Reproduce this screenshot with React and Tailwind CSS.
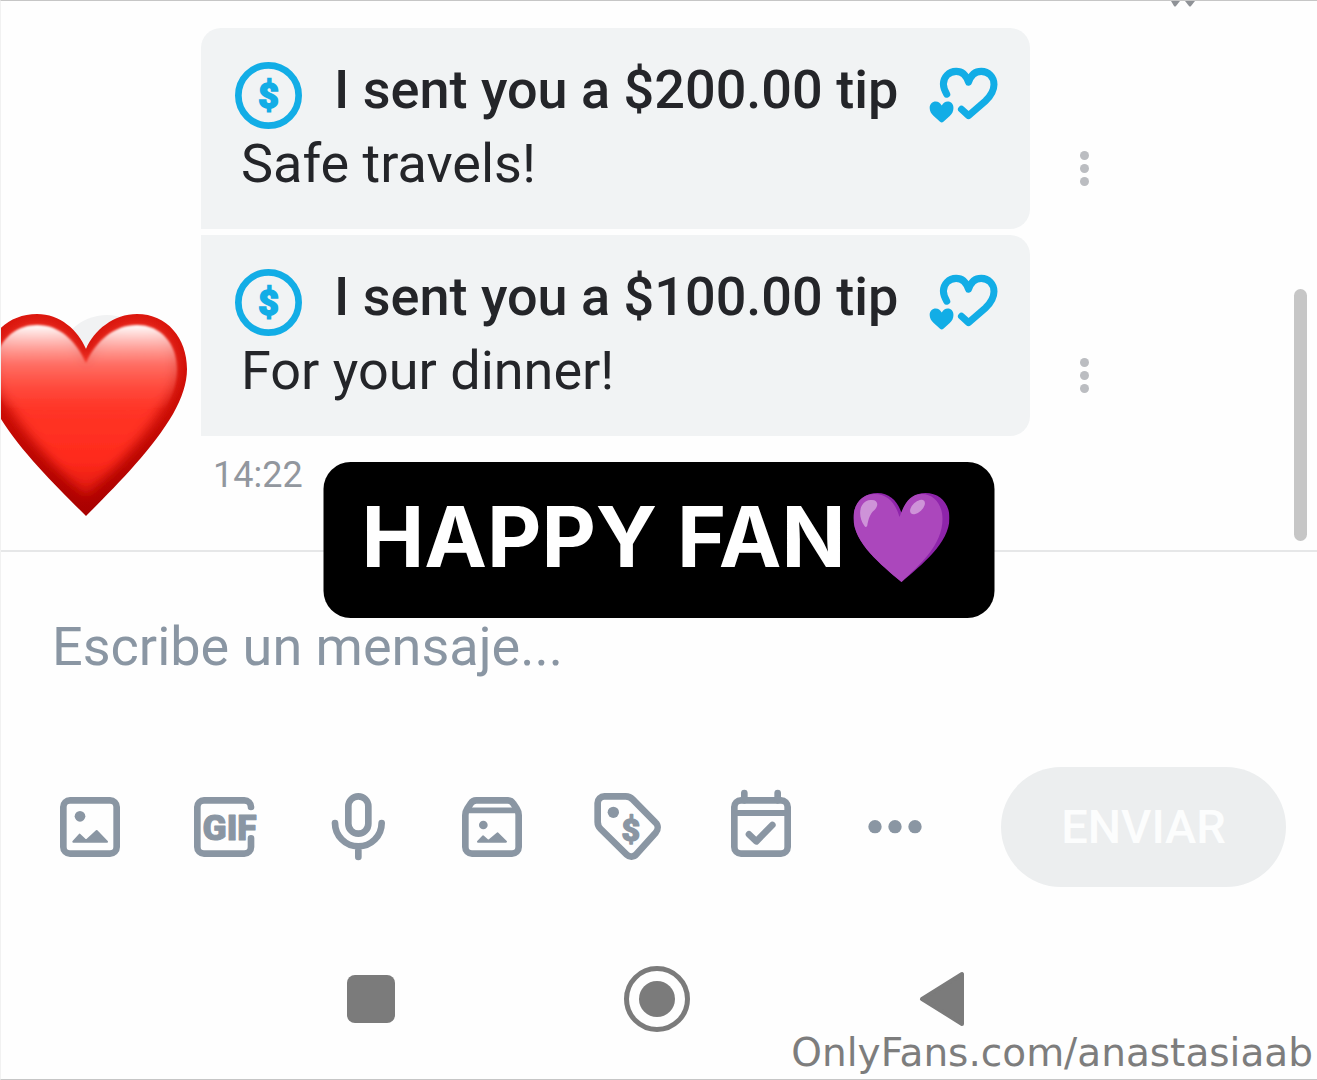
const messages = [
  { id: 1, amount: '$200.00', body: 'Safe travels!' },
  { id: 2, amount: '$100.00', body: 'For your dinner!' },
]

function DollarIcon() {
  return (
    <svg viewBox="2 2 20 20" className="size-[67px] shrink-0 text-[#12ade6]" fill="none" aria-hidden="true">
      <circle cx="12" cy="12" r="9" stroke="currentColor" strokeWidth="2" />
      <text
        x="12"
        y="15.7"
        textAnchor="middle"
        fontSize="10.6"
        fill="currentColor"
        stroke="currentColor"
        strokeWidth=".5"
        className="font-['Roboto',sans-serif] font-black"
      >
        $
      </text>
    </svg>
  )
}

function HeartsIcon() {
  return (
    <svg viewBox="2 2 20 20" className="size-[67px] shrink-0 overflow-visible text-[#12ade6]" fill="none" aria-hidden="true">
      <path
        d="M7 11.6C6.3 10.4 6 9.5 6 8.6C6 6.5 7.6 4.8 9.8 4.8C11.6 4.8 12.8 5.9 13.5 8C14.2 5.9 15.5 4.8 17.3 4.8C19.5 4.8 21.1 6.5 21.1 8.7C21.1 10.8 20 12.2 18.6 13.6L13.5 18L11.4 16.1"
        stroke="currentColor"
        strokeWidth="2.1"
        strokeLinecap="round"
        strokeLinejoin="round"
      />
      <path
        d="M5.5 15C5 14.2 4.5 13.8 3.7 13.8C2.7 13.8 1.9 14.6 1.9 15.7C1.9 16.7 2.4 17.4 3.1 18.1L5 19.8C5.3 20.1 5.7 20.1 6 19.8L7.9 18.1C8.6 17.4 9 16.7 9 15.7C9 14.6 8.3 13.8 7.3 13.8C6.5 13.8 6 14.2 5.5 15Z"
        fill="currentColor"
      />
    </svg>
  )
}

function ToolIcon({ children }) {
  return (
    <svg
      viewBox="0 0 24 24"
      className="size-20"
      fill="none"
      stroke="currentColor"
      strokeWidth="2"
      strokeLinecap="round"
      strokeLinejoin="round"
      aria-hidden="true"
    >
      {children}
    </svg>
  )
}

const tools = [
  {
    label: 'Imagen',
    icon: (
      <>
        <rect x="4" y="4" width="16" height="16" rx="2" />
        <circle cx="9" cy="8.8" r="1.6" fill="currentColor" stroke="none" />
        <path d="M7 16.4L8.9 14.3L10.8 16.1L14 13.2L17.1 16.4Z" fill="currentColor" strokeWidth=".6" />
      </>
    ),
  },
  {
    label: 'GIF',
    icon: (
      <>
        <path d="M20.1 6V6A2 2 0 0 0 18.1 4H6A2 2 0 0 0 4 6V18A2 2 0 0 0 6 20H18.1A2 2 0 0 0 20.1 18V15.4" />
        <text
          x="13.7"
          y="15.8"
          textAnchor="middle"
          fontSize="10.6"
          fill="currentColor"
          stroke="currentColor"
          strokeWidth=".3"
          className="font-['Roboto',sans-serif] font-black"
        >
          GIF
        </text>
      </>
    ),
  },
  {
    label: 'Audio',
    icon: (
      <>
        <rect x="9.1" y="2.8" width="6" height="11.2" rx="3" />
        <path d="M5.1 10.8A7 7 0 0 0 19.1 10.8M12.1 18V21" />
      </>
    ),
  },
  {
    label: 'Archivo',
    icon: (
      <>
        <path d="M4 8.5V18A2 2 0 0 0 6 20H18A2 2 0 0 0 20 18V8.5C20 7.7 19.8 7.1 19.4 6.5L18.4 5A2 2 0 0 0 16.7 4H7.3A2 2 0 0 0 5.6 5L4.6 6.5C4.2 7.1 4 7.7 4 8.5Z" />
        <path d="M4.6 7H19.4" strokeWidth="1.7" />
        <circle cx="9.4" cy="11.4" r="1.3" fill="currentColor" stroke="none" />
        <path d="M7.8 16.4L9.3 14.8L10.9 16.2L13.7 13.9L16.2 16.4Z" fill="currentColor" strokeWidth=".6" />
      </>
    ),
  },
  {
    label: 'Precio',
    icon: (
      <>
        <path d="M5.2 2.8H11.6A3 3 0 0 1 13.7 3.7L20.5 10.6A2.2 2.2 0 0 1 20.6 13.7L14.8 20.2A2 2 0 0 1 11.9 20.3L4.1 12.6A3 3 0 0 1 3.2 10.5V4.8A2 2 0 0 1 5.2 2.8Z" />
        <circle cx="7.9" cy="7.6" r="1.7" fill="currentColor" stroke="none" />
        <text
          x="13.1"
          y="16.1"
          textAnchor="middle"
          fontSize="9.6"
          fill="currentColor"
          stroke="currentColor"
          strokeWidth=".4"
          className="font-['Roboto',sans-serif] font-black"
        >
          $
        </text>
      </>
    ),
  },
  {
    label: 'Programar',
    icon: (
      <>
        <rect x="4" y="4" width="16" height="16" rx="2" />
        <path d="M7 1.8V4M17 1.8V4" />
        <path d="M4 7.8H20" strokeWidth="1.8" />
        <path d="M8.4 14.2L10.6 16.3L15.4 11.4" />
      </>
    ),
  },
  {
    label: 'Más',
    icon: (
      <g fill="currentColor" stroke="none">
        <circle cx="6" cy="11.9" r="2" />
        <circle cx="12" cy="11.9" r="2" />
        <circle cx="18" cy="11.9" r="2" />
      </g>
    ),
  },
]

function Message({ amount, body }) {
  return (
    <li className="flex items-end gap-[34px]">
      <div className="min-w-0 flex-1 rounded-r-[20px] bg-[#f1f3f4] pt-[34px] pr-[33px] pb-[30px] pl-[34px]">
        <div className="flex items-start">
          <DollarIcon />
          <p className="ml-8 flex-1 text-[54px] leading-14 font-medium whitespace-nowrap">I sent you a {amount} tip</p>
          <HeartsIcon />
        </div>
        <p className="pl-[6px] text-[54px] leading-[70px]">{body}</p>
      </div>
      <button type="button" aria-label="Opciones" className="mb-[41px] flex h-10 w-10 flex-col items-center justify-center gap-1">
        <span className="size-[9px] rounded-full bg-[#bbbdc1]" />
        <span className="size-[9px] rounded-full bg-[#bbbdc1]" />
        <span className="size-[9px] rounded-full bg-[#bbbdc1]" />
      </button>
    </li>
  )
}

// Glossy red heart that covers the sender's avatar
function RedHeart() {
  return (
    <svg viewBox="0 0 204 204" className="absolute top-[312px] -left-[17px] size-[204px]" aria-hidden="true">
      <defs>
        <linearGradient id="redBody" x1="0" y1="10" x2="0" y2="195" gradientUnits="userSpaceOnUse">
          <stop offset="0" stopColor="#ff4638" />
          <stop offset=".45" stopColor="#ff3527" />
          <stop offset=".75" stopColor="#ff2a1c" />
          <stop offset="1" stopColor="#d01006" />
        </linearGradient>
        <linearGradient id="redRim" x1="0" y1="0" x2="0" y2="1">
          <stop offset="0" stopColor="#dc180f" />
          <stop offset=".5" stopColor="#c90c05" />
          <stop offset="1" stopColor="#a80000" />
        </linearGradient>
        <linearGradient id="redShine" x1="0" y1="12" x2="0" y2="100" gradientUnits="userSpaceOnUse">
          <stop offset="0" stopColor="#fff" />
          <stop offset=".12" stopColor="#ffe2e0" stopOpacity=".9" />
          <stop offset=".45" stopColor="#ff9f98" stopOpacity=".5" />
          <stop offset="1" stopColor="#ff5a4e" stopOpacity="0" />
        </linearGradient>
        <filter id="redSoft" x="-10%" y="-10%" width="120%" height="120%">
          <feGaussianBlur stdDeviation="6" />
        </filter>
        <filter id="shineSoft" x="-10%" y="-10%" width="120%" height="120%">
          <feGaussianBlur stdDeviation="1" />
        </filter>
        <clipPath id="redClip">
          <path d="M102 203C73 174 35 137 14 101C4 84 0 69 0 56C0 25 22 1 53 1C76 1 94 17 102 36C110 17 130 1 153 1C183 1 203 25 203 56C203 70 198 85 189 101C168 137 131 174 102 203Z" />
        </clipPath>
      </defs>
      <g clipPath="url(#redClip)">
        <rect width="204" height="204" fill="url(#redRim)" />
        <path
          d="M102 182C80 162 48 130 28 97C16 80 12 69 12 56C12 32 30 13 53 13C76 13 93 31 102 51C111 31 130 13 153 13C176 13 191 32 191 56C191 69 187 80 176 97C156 130 124 162 102 182Z"
          fill="url(#redBody)"
          filter="url(#redSoft)"
        />
      </g>
      <path
        d="M53 12C76 12 92 28 102 50C112 28 130 12 153 12C177 12 193 31 193 56C193 68 190 80 182 94L102 102L22 94C14 80 11 68 11 56C11 31 29 12 53 12Z"
        fill="url(#redShine)"
        filter="url(#shineSoft)"
      />
    </svg>
  )
}

function PurpleHeart() {
  return (
    <svg viewBox="0 0 96 89" className="mb-[6px] h-[89px] w-24 shrink-0" aria-hidden="true">
      <path d="M48 89C28 72 0 50 0 25C0 10 10 0 24 0C36 0 44 8 48 20C52 8 60 0 72 0C86 0 96 10 96 25C96 50 68 72 48 89Z" fill="#8e24aa" />
      <path d="M48 89C28 72 0 50 0 25C0 10 9 1 21 1C34 1 42 10 46 24C51 10 57 1 68 1C81 1 89 12 89 26C89 52 66 72 48 89Z" fill="#ab47bc" />
      <path d="M11 33C4 24 5 8 17 7C24 6 26 12 21 17C16 21 15 27 14 31C14 34 12 35 11 33Z" fill="#ce93d8" />
      <ellipse cx="64" cy="14" rx="9" ry="5" transform="rotate(-43 64 14)" fill="#ce93d8" />
    </svg>
  )
}

export default function App() {
  return (
    <div className="relative flex min-h-screen flex-col overflow-hidden border-y border-l border-y-[#c6c6c6] border-l-[#f1f1f1] bg-[#fefefe] font-['Roboto',sans-serif] text-[#242529]">
      <main className="relative border-b-2 border-[#e6e7e8] pt-[27px] pr-[213px] pb-[55px] pl-[200px]">
        {/* tail of the message above, scrolled off the top */}
        <svg viewBox="0 0 24 6" className="absolute top-0 right-[122px] h-[6px] w-6" fill="#8f9297" aria-hidden="true">
          <path d="M0 0H9L5 5Q4 6 3 5Z" />
          <path d="M14 0H24L20 5Q19 6 18 5Z" />
        </svg>
        <ul className="flex flex-col gap-[6px] [&>li:first-child>div]:rounded-tl-[20px]">
          {messages.map((m) => (
            <Message key={m.id} amount={m.amount} body={m.body} />
          ))}
        </ul>
        <time className="mt-[19px] block pl-3 text-4xl leading-10 text-[#92979e]">14:22</time>
        <div className="absolute top-[314px] left-14 size-[100px] rounded-full bg-[#f1f2f3]" />
        <RedHeart />
        <div className="absolute right-[10px] bottom-[9px] h-[252px] w-[13px] rounded-full bg-[#c6c6c6]" />
      </main>

      <form className="text-[#8a96a3]" onSubmit={(e) => e.preventDefault()}>
        <input
          type="text"
          aria-label="Mensaje"
          placeholder="Escribe un mensaje..."
          className="mt-[62px] block h-16 w-full bg-transparent px-[51px] text-[54px] outline-none placeholder:text-[#8a96a3]"
        />
        <div className="mt-[89px] flex items-center gap-[66px] pr-[31px] pl-[49px]">
          <div className="flex flex-1 items-center justify-between">
            {tools.map((tool) => (
              <button key={tool.label} type="button" aria-label={tool.label}>
                <ToolIcon>{tool.icon}</ToolIcon>
              </button>
            ))}
          </div>
          <button type="submit" className="h-[120px] w-[285px] rounded-full bg-[#eceeef] text-[47px] font-medium text-[#fcfdfd]">
            ENVIAR
          </button>
        </div>
      </form>

      <nav className="mt-[79px] flex items-center justify-between pr-[352px] pl-[346px] text-[#7b7b7b]">
        <button type="button" aria-label="Recientes" className="size-12 rounded-[8px] bg-[#7b7b7b]" />
        <button type="button" aria-label="Inicio" className="flex size-[66px] items-center justify-center rounded-full border-[5px] border-[#7b7b7b]">
          <span className="size-9 rounded-full bg-[#7b7b7b]" />
        </button>
        <button type="button" aria-label="Atrás">
          <svg viewBox="0 0 46 56" className="h-14 w-[46px]" fill="currentColor" stroke="currentColor" strokeWidth="4" strokeLinejoin="round" aria-hidden="true">
            <path d="M3 28L43 3V53Z" />
          </svg>
        </button>
      </nav>

      <div className="absolute top-[461px] left-1/2 flex h-[156px] w-[671px] -translate-x-1/2 items-center gap-2 rounded-[27px] bg-black pl-[38px]">
        <span className="mb-[6px] font-['Inter',sans-serif] text-[84px] font-bold whitespace-nowrap text-white">HAPPY FAN</span>
        <PurpleHeart />
      </div>

      <a href="#profile" className="absolute right-1 bottom-0 font-['DejaVu_Sans',sans-serif] text-[39px] leading-[52px] text-[#7d7d7d]">
        OnlyFans.com/anastasiaab
      </a>
    </div>
  )
}
